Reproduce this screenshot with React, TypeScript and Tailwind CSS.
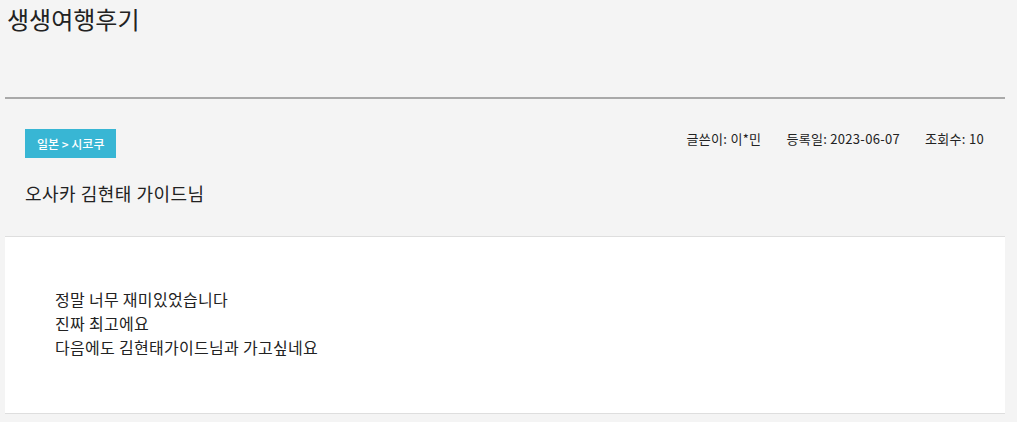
import React from 'react';

const FONT = { fontFamily: '"Noto Sans CJK KR", "Noto Sans", sans-serif' };

const meta = [
    { label: '글쓴이', value: '이*민' },
    { label: '등록일', value: '2023-06-07' },
    { label: '조회수', value: '10' },
];

const body = ['정말 너무 재미있었습니다', '진짜 최고에요', '다음에도 김현태가이드님과 가고싶네요'];

export default function App() {
    return (
        <div className="min-h-[422px] bg-[#f4f4f4] text-[#222]" style={FONT}>
            <div className="ml-[5px] w-[1000px]">
                {/* Page title */}
                <h1 className="h-[97px] pl-[2px] pt-[3px] text-[24px] leading-[32px] font-normal">
                    생생여행후기
                </h1>
                <div className="h-[2px] bg-[#a9a9a9]" />

                {/* Post header */}
                <div className="px-[20px] pt-[30px] pb-[31px]">
                    <div className="flex items-start justify-between">
                        <span className="flex h-[29px] items-center bg-[#38b6d4] px-[12px] text-[12px] font-medium text-white">
                            일본 &gt; 시코쿠
                        </span>
                        <div className="mt-[1px] flex gap-[25px] pr-[1px] text-[13px] leading-[18px] tracking-[0.3px]">
                            {meta.map((m) => (
                                <span key={m.label}>
                                    {m.label}: {m.value}
                                </span>
                            ))}
                        </div>
                    </div>
                    <h2 className="mt-[23px] text-[18px] leading-[24px] font-normal tracking-[0.5px]">
                        오사카 김현태 가이드님
                    </h2>
                </div>

                {/* Post body */}
                <div className="border-y border-[#dedede] bg-white px-[50px] pt-[50px] pb-[54px]">
                    {body.map((line) => (
                        <p key={line} className="text-[16px] leading-[24px] tracking-[0.3px]">
                            {line}
                        </p>
                    ))}
                </div>
            </div>
        </div>
    );
}
